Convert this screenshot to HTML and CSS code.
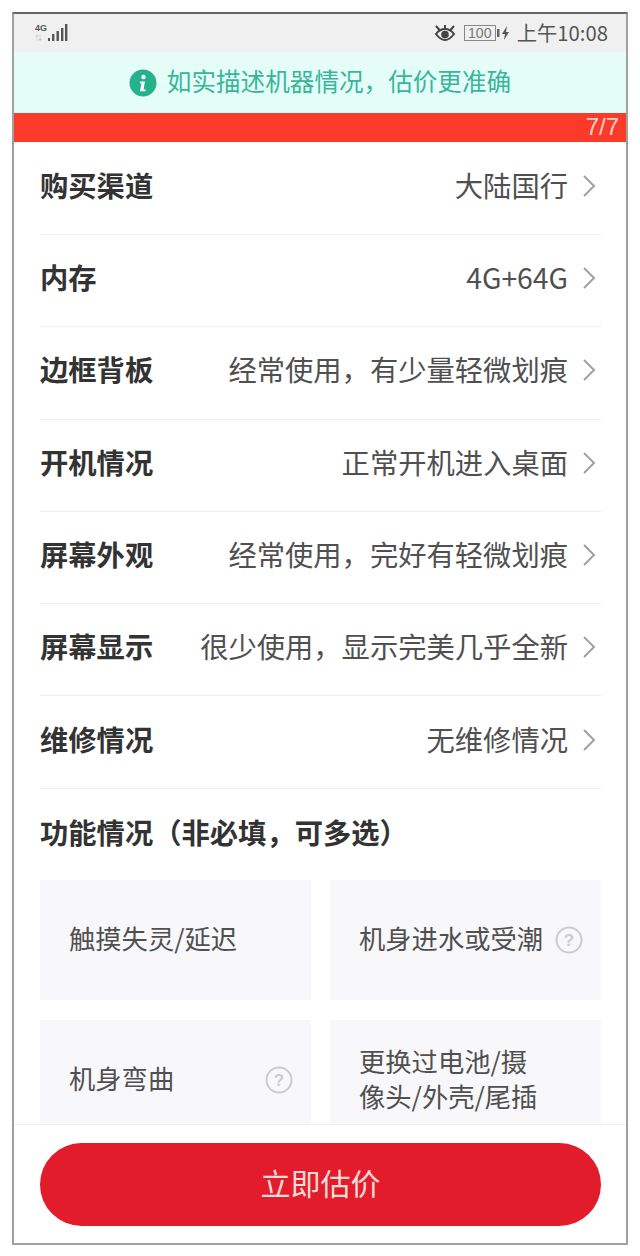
FILE: index.html
```html
<!DOCTYPE html>
<html lang="zh-CN">
<head>
    <meta charset="UTF-8">
    <meta name="viewport" content="width=device-width, initial-scale=1.0">
    <title>估价</title>
    <link rel="stylesheet" href="styles.css">
</head>
<body>
    <div class="phone">
        <div class="status-bar">
            <div class="signal">
                <div class="net"><span class="net-top">4G</span><span class="net-sub">⇅</span></div>
                <svg class="bars" width="22" height="18" viewBox="0 0 22 18">
                    <rect x="1" y="14" width="2" height="3" fill="#555"/>
                    <rect x="5" y="10" width="2.4" height="7" fill="#555"/>
                    <rect x="9.5" y="7" width="2.4" height="10" fill="#555"/>
                    <rect x="14" y="4" width="2.4" height="13" fill="#555"/>
                    <rect x="18" y="0" width="2.4" height="17" fill="#555"/>
                </svg>
            </div>
            <div class="status-right">
                <svg class="eye" width="22" height="18" viewBox="0 0 22 18">
                    <path d="M2 10C5 6 8 5 11 5s6 1 9 5c-3 4-6 6-9 6s-6-2-9-6Z" fill="none" stroke="#444" stroke-width="2"/>
                    <circle cx="11" cy="10.500" r="3.800" fill="#444"/>
                    <path d="M2 2l3.500 4M11 1v4M20 2l-3.500 4" stroke="#444" stroke-width="2"/>
                </svg>
                <div class="battery"><span class="battery-level">100</span></div>
                <svg class="charge" width="14" height="16" viewBox="0 0 14 16">
                    <rect x="0" y="4" width="2.500" height="8" fill="#666"/>
                    <path d="M10 1L5 9h3l-1 6 5-8H9l1-6Z" fill="#555"/>
                </svg>
                <span class="clock">上午10:08</span>
            </div>
        </div>

        <div class="notice">
            <svg class="notice-icon" width="28" height="28" viewBox="0 0 28 28">
                <circle cx="14" cy="14" r="13.500" fill="#26b18d"/>
                <circle cx="14.500" cy="8" r="2.200" fill="#fff"/>
                <path d="M11 12.500h5l-1.500 8h2v1.700h-5.500l1.500-8h-1.500Z" fill="#fff"/>
            </svg>
            <span class="notice-text">如实描述机器情况&#xFF0C;估价更准确</span>
        </div>

        <div class="progress"><span>7/7</span></div>

        <div class="content">
            <div class="row">
                <span class="row-label">购买渠道</span>
                <span class="row-value">大陆国行</span>
                <svg class="chevron" width="14" height="24" viewBox="0 0 14 24"><path d="M2 2l10 10L2 22" fill="none" stroke="#a0a0a0" stroke-width="2"/></svg>
            </div>
            <div class="row">
                <span class="row-label">内存</span>
                <span class="row-value">4G+64G</span>
                <svg class="chevron" width="14" height="24" viewBox="0 0 14 24"><path d="M2 2l10 10L2 22" fill="none" stroke="#a0a0a0" stroke-width="2"/></svg>
            </div>
            <div class="row">
                <span class="row-label">边框背板</span>
                <span class="row-value">经常使用&#xFF0C;有少量轻微划痕</span>
                <svg class="chevron" width="14" height="24" viewBox="0 0 14 24"><path d="M2 2l10 10L2 22" fill="none" stroke="#a0a0a0" stroke-width="2"/></svg>
            </div>
            <div class="row">
                <span class="row-label">开机情况</span>
                <span class="row-value">正常开机进入桌面</span>
                <svg class="chevron" width="14" height="24" viewBox="0 0 14 24"><path d="M2 2l10 10L2 22" fill="none" stroke="#a0a0a0" stroke-width="2"/></svg>
            </div>
            <div class="row">
                <span class="row-label">屏幕外观</span>
                <span class="row-value">经常使用&#xFF0C;完好有轻微划痕</span>
                <svg class="chevron" width="14" height="24" viewBox="0 0 14 24"><path d="M2 2l10 10L2 22" fill="none" stroke="#a0a0a0" stroke-width="2"/></svg>
            </div>
            <div class="row">
                <span class="row-label">屏幕显示</span>
                <span class="row-value">很少使用&#xFF0C;显示完美几乎全新</span>
                <svg class="chevron" width="14" height="24" viewBox="0 0 14 24"><path d="M2 2l10 10L2 22" fill="none" stroke="#a0a0a0" stroke-width="2"/></svg>
            </div>
            <div class="row">
                <span class="row-label">维修情况</span>
                <span class="row-value">无维修情况</span>
                <svg class="chevron" width="14" height="24" viewBox="0 0 14 24"><path d="M2 2l10 10L2 22" fill="none" stroke="#a0a0a0" stroke-width="2"/></svg>
            </div>

            <h2 class="section-title">功能情况&#xFF08;非必填&#xFF0C;可多选&#xFF09;</h2>

            <div class="options">
                <div class="option"><span>触摸失灵/延迟</span></div>
                <div class="option">
                    <span>机身进水或受潮</span>
                    <svg class="help" width="28" height="28" viewBox="0 0 28 28"><circle cx="14" cy="14" r="12.500" fill="none" stroke="#ccc" stroke-width="2"/><text x="14" y="20" text-anchor="middle" class="help-mark">?</text></svg>
                </div>
                <div class="option">
                    <span>机身弯曲</span>
                    <svg class="help" width="28" height="28" viewBox="0 0 28 28"><circle cx="14" cy="14" r="12.500" fill="none" stroke="#ccc" stroke-width="2"/><text x="14" y="20" text-anchor="middle" class="help-mark">?</text></svg>
                </div>
                <div class="option"><span>更换过电池/摄<br>像头/外壳/尾插</span></div>
            </div>
        </div>

        <div class="footer">
            <button class="submit" type="button">立即估价</button>
        </div>
    </div>
</body>
</html>
```

FILE: styles.css
```css
* {
    box-sizing: border-box;
}
body {
    margin: 0;
    background-color: #fff;
    font-family: "Noto Sans CJK SC", "Noto Sans", sans-serif;
    color: #333;
}
.phone {
    width: 616px;
    height: 1233px;
    margin: 12px 0 0 12px;
    border: 2px solid #a0a0a0;
    border-top-color: #666;
    display: flex;
    flex-direction: column;
    overflow: hidden;
    background-color: #fff;
}
.status-bar {
    height: 38px;
    flex-shrink: 0;
    background-color: #f0f0f0;
    display: flex;
    justify-content: space-between;
    align-items: center;
    padding: 0 18px 0 21px;
}
.signal {
    display: flex;
    align-items: flex-end;
}
.net {
    display: flex;
    flex-direction: column;
    font-family: "Liberation Sans", sans-serif;
    line-height: 9px;
    color: #555;
}
.net-top {
    font-size: 9px;
    font-weight: bold;
}
.net-sub {
    font-size: 7px;
    color: #bbb;
}
.status-right {
    display: flex;
    align-items: center;
    color: #555;
}
.eye {
    margin-right: 8px;
}
.battery {
    width: 32px;
    height: 16px;
    border: 1px solid #888;
    font-family: "Liberation Sans", sans-serif;
    font-size: 14px;
    line-height: 14px;
    text-align: center;
    color: #777;
}
.charge {
    margin-left: 1px;
    margin-right: 6px;
}
.clock {
    font-size: 20.300px;
    line-height: 26px;
    margin-bottom: 2px;
}
.notice {
    height: 61px;
    flex-shrink: 0;
    background-color: #e5fdf8;
    color: #38b698;
    font-size: 24.600px;
    display: flex;
    justify-content: center;
    align-items: center;
    gap: 10px;
}
.notice-text {
    margin-bottom: 5px;
}
.progress {
    height: 29px;
    flex-shrink: 0;
    background-color: #fb3a2a;
    color: #f8d0c8;
    font-family: "Liberation Sans", sans-serif;
    font-size: 24px;
    line-height: 27px;
    text-align: right;
    padding-right: 7px;
}
.content {
    flex: 1;
    min-height: 0;
    overflow: hidden;
    padding: 0.700px 25px 0 26px;
}
.row {
    height: 92.300px;
    display: flex;
    align-items: center;
    border-bottom: 1px solid #f1ecf1;
    padding-right: 5px;
    padding-bottom: 5px;
}
.row-label {
    font-size: 28.300px;
    font-weight: bold;
    color: #333;
    flex-shrink: 0;
    margin-bottom: 3px;
}
.row-value {
    font-size: 28.300px;
    font-weight: 400;
    color: #505050;
    margin-left: auto;
    margin-right: 14px;
    margin-bottom: 3px;
    white-space: nowrap;
}
.chevron {
    flex-shrink: 0;
}
.section-title {
    margin: 0;
    height: 91px;
    font-size: 28.300px;
    line-height: 86px;
    font-weight: bold;
    color: #333;
}
.options {
    display: grid;
    grid-template-columns: 271px 271px;
    grid-auto-rows: 120px;
    gap: 20px 19px;
}
.option {
    background-color: #f8f7fa;
    display: flex;
    justify-content: space-between;
    align-items: center;
    padding: 0 18px 0 29px;
    font-size: 26.300px;
    font-weight: 400;
    line-height: 35px;
    color: #505050;
}
.option span {
    margin-bottom: 4px;
}
.help {
    flex-shrink: 0;
}
.help-mark {
    font-family: "Liberation Sans", sans-serif;
    font-size: 17px;
    font-weight: bold;
    fill: #ccc;
}
.footer {
    height: 119px;
    flex-shrink: 0;
    border-top: 1px solid #eee;
    padding: 18px 25px 0 26px;
    background-color: #fff;
}
.submit {
    display: block;
    width: 561px;
    height: 83px;
    border: none;
    border-radius: 42px;
    padding: 0 0 6px;
    background-color: #e31c2b;
    color: #fbdcd8;
    font-family: inherit;
    font-size: 30px;
    font-weight: 400;
}
```
